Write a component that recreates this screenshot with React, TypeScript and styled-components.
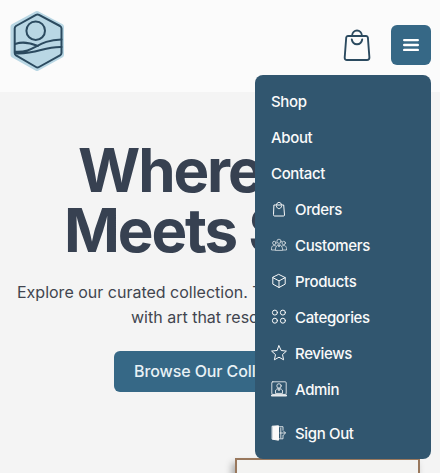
import React from "react";
import styled, { createGlobalStyle } from "styled-components";

const GlobalStyle = createGlobalStyle`
  * { box-sizing: border-box; }
  html, body { margin: 0; height: 100%; overflow: hidden; }
  body { background: #f4f4f4; font-family: Inter, "Liberation Sans", sans-serif; }
`;

const Page = styled.div`
  height: 473px;
  overflow: hidden;
  display: flex;
  flex-direction: column;
`;

const Header = styled.header`
  position: relative;
  z-index: 2;
  flex: none;
  height: 92px;
  padding: 9px 9px 0 8px;
  display: flex;
  justify-content: space-between;
  align-items: flex-start;
  background: #fbfbfb;
`;

const Actions = styled.div`
  display: flex;
  align-items: center;
  gap: 18px;
  padding-top: 16px;
`;

const MenuButton = styled.button`
  width: 40px;
  height: 40px;
  padding: 0;
  border: 0;
  border-radius: 6px;
  background: #366886;
  color: #fff;
  display: flex;
  align-items: center;
  justify-content: center;
`;

const Menu = styled.nav`
  position: absolute;
  top: 75px;
  right: 9px;
  width: 176px;
  height: 384px;
  padding: 8px 0;
  border-radius: 8px;
  background: #31566f;
  display: flex;
  flex-direction: column;
`;

const MenuItem = styled.a<{ $separated?: boolean }>`
  height: 36px;
  flex: none;
  margin-top: ${({ $separated }) => ($separated ? 8 : 0)}px;
  padding: 0 16px;
  display: flex;
  align-items: center;
  gap: 8px;
  color: #fafafa;
  font-size: 15px;
  font-weight: 500;
  letter-spacing: -0.35px;
  white-space: nowrap;
`;

const Icon = styled.svg`
  flex: none;
  display: block;
  fill: none;
  stroke: currentColor;
  stroke-linecap: round;
  stroke-linejoin: round;
`;

const Hero = styled.main`
  display: flex;
  flex-direction: column;
  align-items: flex-start;
  padding-top: 48px;
`;

const Title = styled.h1`
  margin: 0;
  color: #374151;
  font-size: 60px;
  line-height: 60px;
  font-weight: 700;
  letter-spacing: -2.1px;
`;

const Line = styled.span<{ $indent: number }>`
  display: block;
  padding-left: ${({ $indent }) => $indent}px;
  white-space: nowrap;
`;

const Lead = styled.p`
  margin: 20px 0 0;
  color: #41454f;
  font-size: 16px;
  line-height: 25px;
`;

const CallToAction = styled.button`
  align-self: center;
  width: 212px;
  height: 41px;
  margin-top: 21px;
  padding: 0 0 1px 20px;
  border: 0;
  border-radius: 6px;
  background: #366886;
  color: #e8f1f5;
  font: 500 16px Inter, sans-serif;
  letter-spacing: -0.1px;
  text-align: left;
  white-space: nowrap;
`;

const PictureFrame = styled.div`
  width: 185px;
  height: 60px;
  margin: 66px 0 0 235px;
  border: 2px solid #99785d;
  background: #f3f3f2;
  box-shadow: -3px 5px 7px rgba(0, 0, 0, 0.3);
`;

const Logo = () => (
  <Icon width="58" height="64" viewBox="0 0 58 64">
    <path d="M29 4.500 53.500 17.500V46L29 59.500 5 46V17.500Z" fill="#b9d7e4" stroke="#b9d7e4" strokeWidth="5" />
    <g stroke="#2b4a5f" strokeWidth="2">
      <path d="M28 5.800Q29.500 5 31 5.800L52 17Q53.500 18 53.500 19.500V44Q53.500 45.500 52 46.300L31 58Q29.500 59 28 58L8 46.300Q6.700 45.500 6.700 44V19.500Q6.700 18 8 17Z" />
      <circle cx="27.700" cy="21.700" r="9.300" />
      <path d="M7 35C15 32.500 21 33.500 30 37M7 42.700C28 44 28 31 53.500 30.500M7 44.300C29 45.500 35 37.500 53.500 38" />
    </g>
  </Icon>
);

const BagIcon = () => (
  <Icon width="30" height="34" viewBox="0 0 30 34" color="#2b4a5f" strokeWidth="1.900">
    <path d="M4.800 8H23.200Q24.700 8 24.900 9.700L26.400 29.500Q26.400 32 24 32H4Q1.600 32 1.700 29.500L3.200 9.700Q3.400 8 4.800 8ZM9 8C9.300 .7 18.700 .7 19 8M8.800 11.500C10 17.800 18 17.800 19.200 11.500" />
  </Icon>
);

type ItemIconName = "orders" | "customers" | "products" | "categories" | "reviews" | "admin" | "signOut";

const iconShapes: Record<ItemIconName, React.ReactNode> = {
  orders: (
    <path d="M3.300 4H12.700L13.500 14Q13.500 15 12.500 15H3.500Q2.500 15 2.500 14ZM5.500 4C5.500 .4 10.500 .4 10.500 4M5.500 5.500C6.300 8.500 9.700 8.500 10.500 5.500" />
  ),
  customers: (
    <g strokeWidth=".8" strokeOpacity=".85">
      <circle cx="8" cy="4.300" r="2.100" />
      <circle cx="3.300" cy="6" r="1.700" />
      <circle cx="12.700" cy="6" r="1.700" />
      <path d="M4.300 13C4.300 6 11.700 6 11.700 13ZM3.800 13H.5C.2 9 2 7.700 5 9M12.200 13H15.500C15.800 9 14 7.700 11 9M7 8 8 10 9 8" />
    </g>
  ),
  products: <path d="m8 1.500 6.200 3.100v6.500L8 14.500l-6.200-3.400V4.600ZM1.800 4.600 8 7.900l6.200-3.300M8 7.900v6.600" />,
  categories: (
    <>
      <circle cx="3.900" cy="3.600" r="2.500" />
      <circle cx="11.900" cy="3.600" r="2.500" />
      <circle cx="3.900" cy="11.700" r="2.500" />
      <circle cx="11.900" cy="11.700" r="2.500" />
    </>
  ),
  reviews: (
    <path d="m8 .8 2.200 4.700 5.200.6-3.900 3.500 1.100 5.200L8 12.200l-4.600 2.600 1.100-5.200L.6 6.100l5.200-.6Z" />
  ),
  admin: (
    <g strokeWidth=".9" strokeOpacity=".9">
      <rect x=".8" y=".8" width="14.400" height="12.600" rx="1" />
      <circle cx="8" cy="4.900" r="2.200" />
      <path d="M4.500 12V10C4.500 8.500 6 7.700 8 7.700s3.500.8 3.500 2.300v2ZM7 8l1 1.800L9 8" />
      <path d="M.8 14.500H15.200" strokeWidth="1.800" />
    </g>
  ),
  signOut: (
    <>
      <path d="M1.500 1.200 7.500.8v14.400l-6-1Z" fill="currentColor" />
      <path d="M8.500 1.700H12V5M12 10.500v3.300H8.500M9 8h5.300M12.500 6l2 2-2 2M9.800 3v10" strokeWidth=".8" />
    </>
  ),
};

const items: { label: string; icon?: ItemIconName; separated?: boolean }[] = [
  { label: "Shop" },
  { label: "About" },
  { label: "Contact" },
  { label: "Orders", icon: "orders" },
  { label: "Customers", icon: "customers" },
  { label: "Products", icon: "products" },
  { label: "Categories", icon: "categories" },
  { label: "Reviews", icon: "reviews" },
  { label: "Admin", icon: "admin" },
  { label: "Sign Out", icon: "signOut", separated: true },
];

export default function App() {
  return (
    <Page>
      <GlobalStyle />
      <Header>
        <Logo />
        <Actions>
          <BagIcon />
          <MenuButton aria-label="Menu">
            <Icon width="16" height="14" viewBox="0 0 16 14" strokeWidth="2.400">
              <path d="M1.200 2.100H14.800M1.200 7H14.800M1.200 11.900H14.800" />
            </Icon>
          </MenuButton>
        </Actions>
        <Menu>
          {items.map(({ label, icon, separated }) => (
            <MenuItem key={label} $separated={separated}>
              {icon && (
                <Icon width="16" height="16" viewBox="0 0 16 16">
                  {iconShapes[icon]}
                </Icon>
              )}
              {label}
            </MenuItem>
          ))}
        </Menu>
      </Header>
      <Hero>
        <Title>
          <Line $indent={78}>Where Art</Line>
          <Line $indent={64}>Meets Soul</Line>
        </Title>
        <Lead>
          <Line $indent={17}>Explore our curated collection. Transform</Line>
          <Line $indent={131}>with art that resonates.</Line>
        </Lead>
        <CallToAction>Browse Our Collection</CallToAction>
        <PictureFrame />
      </Hero>
    </Page>
  );
}
